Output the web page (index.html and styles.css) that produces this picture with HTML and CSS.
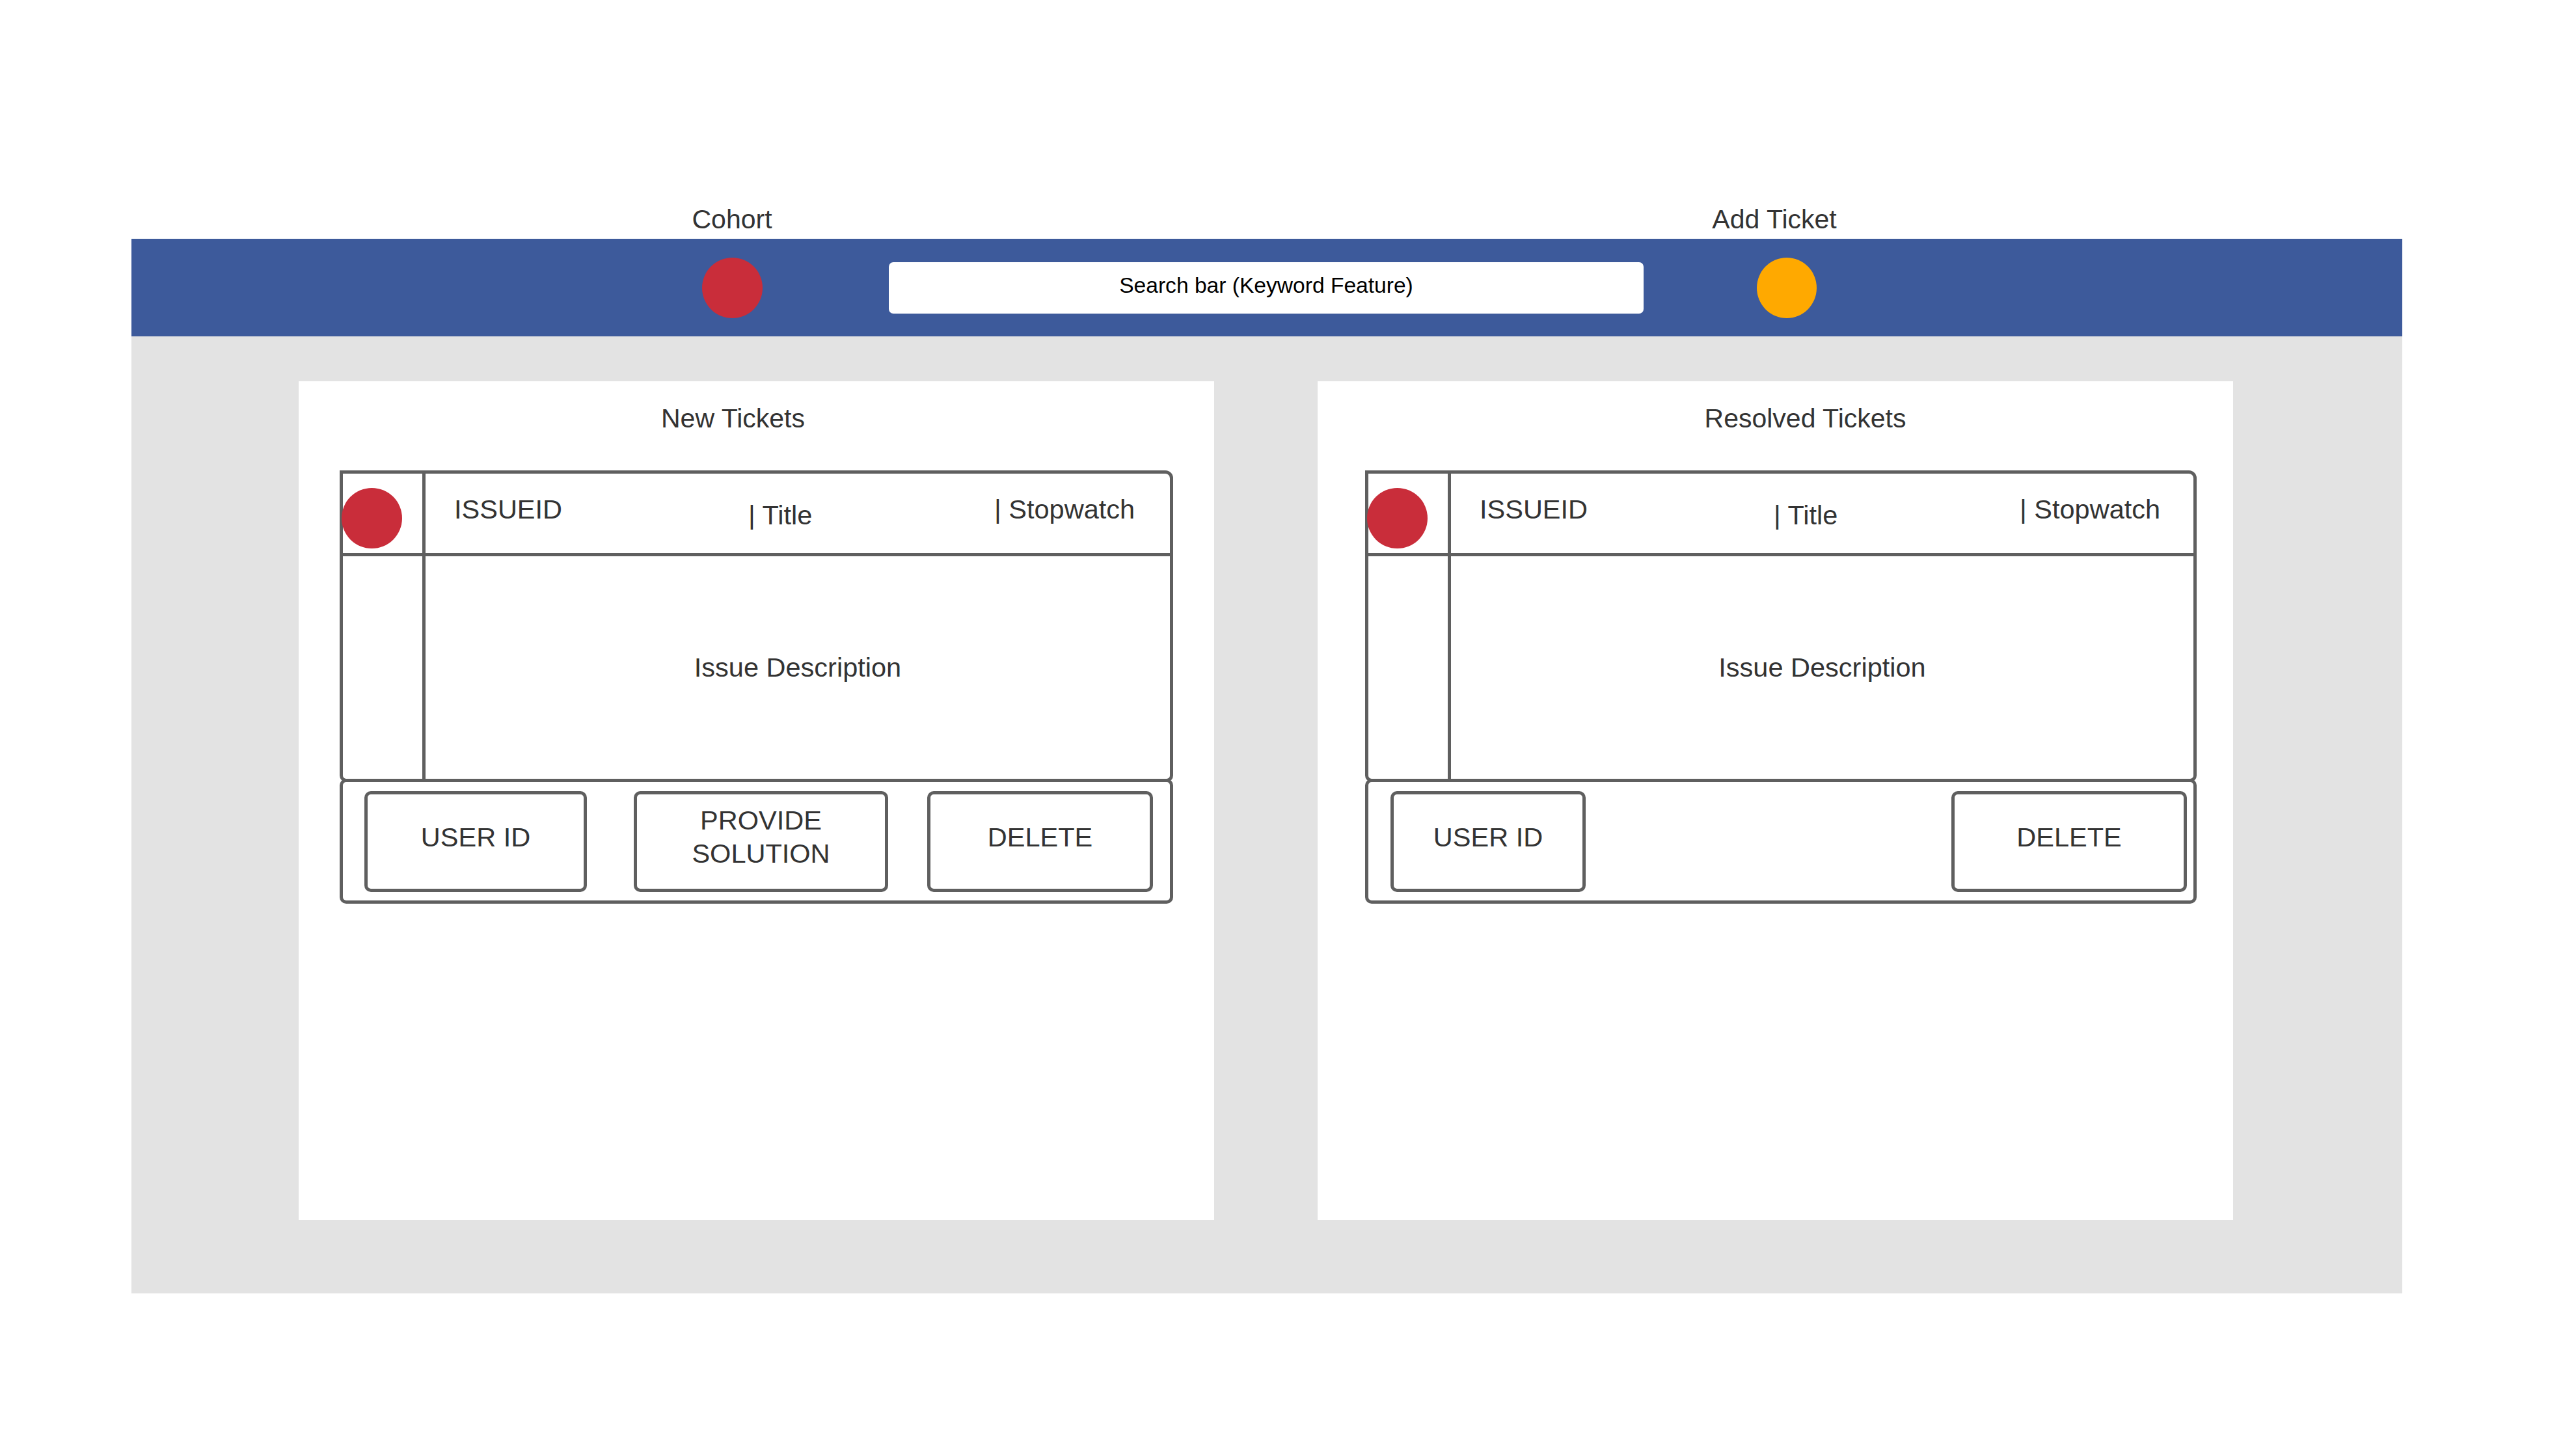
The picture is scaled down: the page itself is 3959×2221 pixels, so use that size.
FILE: index.html
```html
<!DOCTYPE html>
<html lang="en">
<head>
<meta charset="utf-8">
<title>Tickets</title>
<link rel="stylesheet" href="styles.css">
</head>
<body>
<div class="frame">
  <div class="labels">
    <span class="label-cohort">Cohort</span>
    <span class="label-add">Add Ticket</span>
  </div>
  <div class="topbar">
    <div class="dot dot-red"></div>
    <div class="search">Search bar (Keyword Feature)</div>
    <div class="dot dot-orange"></div>
  </div>
  <div class="board">
    <section class="panel panel-new">
      <div class="panel-title">New Tickets</div>
      <div class="ticket ticket-new">
        <div class="ticket-body">
          <div class="cell-dot"><div class="dot dot-red dot-ticket"></div></div>
          <div class="cell-head">
            <span class="h-id">ISSUEID</span>
            <span class="h-title">| Title</span>
            <span class="h-stop">| Stopwatch</span>
          </div>
          <div class="cell-side"></div>
          <div class="cell-desc">Issue Description</div>
        </div>
        <div class="ticket-foot foot-new">
          <div class="btn btn-user">USER ID</div>
          <div class="btn btn-solve">PROVIDE<br>SOLUTION</div>
          <div class="btn btn-delete">DELETE</div>
        </div>
      </div>
    </section>
    <section class="panel panel-resolved">
      <div class="panel-title">Resolved Tickets</div>
      <div class="ticket ticket-resolved">
        <div class="ticket-body">
          <div class="cell-dot"><div class="dot dot-red dot-ticket"></div></div>
          <div class="cell-head">
            <span class="h-id">ISSUEID</span>
            <span class="h-title">| Title</span>
            <span class="h-stop">| Stopwatch</span>
          </div>
          <div class="cell-side"></div>
          <div class="cell-desc">Issue Description</div>
        </div>
        <div class="ticket-foot foot-resolved">
          <div class="btn btn-user">USER ID</div>
          <div class="btn btn-delete">DELETE</div>
        </div>
      </div>
    </section>
  </div>
</div>
</body>
</html>
```
FILE: styles.css
```css
body {
  margin: 0;
  background: #ffffff;
  font-family: "Liberation Sans", Arial, sans-serif;
  color: #333333;
}

.frame {
  margin-left: 202px;
  width: 3490px;
  padding-top: 313px;
}

.labels {
  display: flex;
  height: 48px;
  font-size: 41px;
  line-height: 48px;
  margin-bottom: 6px;
}

.label-cohort {
  width: 200px;
  margin-left: 823px;
  text-align: center;
}

.label-add {
  width: 300px;
  margin-left: 1352px;
  text-align: center;
}

.topbar {
  height: 150px;
  background: #3d5a9b;
  display: flex;
  align-items: center;
  padding-left: 877px;
}

.dot {
  width: 93px;
  height: 93px;
  border-radius: 50%;
  flex: none;
}

.dot-red {
  background: #c92d3a;
}

.dot-orange {
  background: #ffa900;
  width: 92px;
  margin-left: 174px;
}

.search {
  margin-left: 194px;
  width: 1160px;
  height: 79px;
  background: #ffffff;
  border-radius: 7px;
  display: flex;
  align-items: center;
  justify-content: center;
  font-size: 33.6px;
  padding-bottom: 6px;
  box-sizing: border-box;
  color: #000000;
}

.board {
  background: #e3e3e3;
  height: 1471px;
  box-sizing: border-box;
  padding: 69px 0 0 257px;
  display: flex;
  gap: 159px;
  align-items: flex-start;
}

.panel {
  width: 1407px;
  height: 1289px;
  background: #ffffff;
  box-sizing: border-box;
  padding-top: 33px;
}

.panel-title {
  font-size: 41px;
  line-height: 48px;
  text-align: center;
}

.panel-new .panel-title {
  padding-right: 72px;
}

.panel-resolved .panel-title {
  padding-left: 92px;
}

.ticket {
  margin-top: 56px;
}

.ticket-new {
  margin-left: 63px;
  width: 1281px;
}

.ticket-resolved {
  margin-left: 73px;
  width: 1278px;
}

.ticket-body {
  box-sizing: border-box;
  height: 479px;
  border: 5px solid #5f5f5f;
  border-radius: 0 12px 10px 10px;
  display: grid;
  grid-template-columns: 127px 1fr;
  grid-template-rows: 127px 1fr;
  font-size: 41.5px;
  line-height: 48px;
}

.cell-dot {
  border-right: 5px solid #5f5f5f;
  border-bottom: 5px solid #5f5f5f;
}

.dot-ticket {
  margin-left: -2px;
  margin-top: 22px;
}

.cell-head {
  border-bottom: 5px solid #5f5f5f;
  display: flex;
  align-items: flex-start;
  padding-left: 44px;
}

.h-id {
  width: 452px;
  margin-top: 31px;
}

.h-title {
  width: 378px;
  margin-top: 40px;
}

.h-stop {
  margin-top: 31px;
}

.cell-side {
  border-right: 5px solid #5f5f5f;
}

.cell-desc {
  display: flex;
  align-items: center;
  justify-content: center;
}

.ticket-foot {
  box-sizing: border-box;
  height: 192px;
  margin-top: -5px;
  border: 5px solid #5f5f5f;
  border-radius: 10px;
  display: flex;
  align-items: center;
}

.btn {
  box-sizing: border-box;
  height: 155px;
  border: 5px solid #5f5f5f;
  border-radius: 10px;
  display: flex;
  align-items: center;
  justify-content: center;
  text-align: center;
  font-size: 41.5px;
  line-height: 51px;
  padding-bottom: 14px;
}

.foot-new {
  padding-left: 33px;
}

.foot-new .btn-user {
  width: 342px;
}

.foot-new .btn-solve {
  width: 391px;
  margin-left: 72px;
}

.foot-new .btn-delete {
  width: 347px;
  margin-left: 60px;
}

.foot-resolved {
  padding: 0 10px 0 34px;
}

.foot-resolved .btn-user {
  width: 300px;
}

.foot-resolved .btn-delete {
  width: 362px;
  margin-left: auto;
}
```
